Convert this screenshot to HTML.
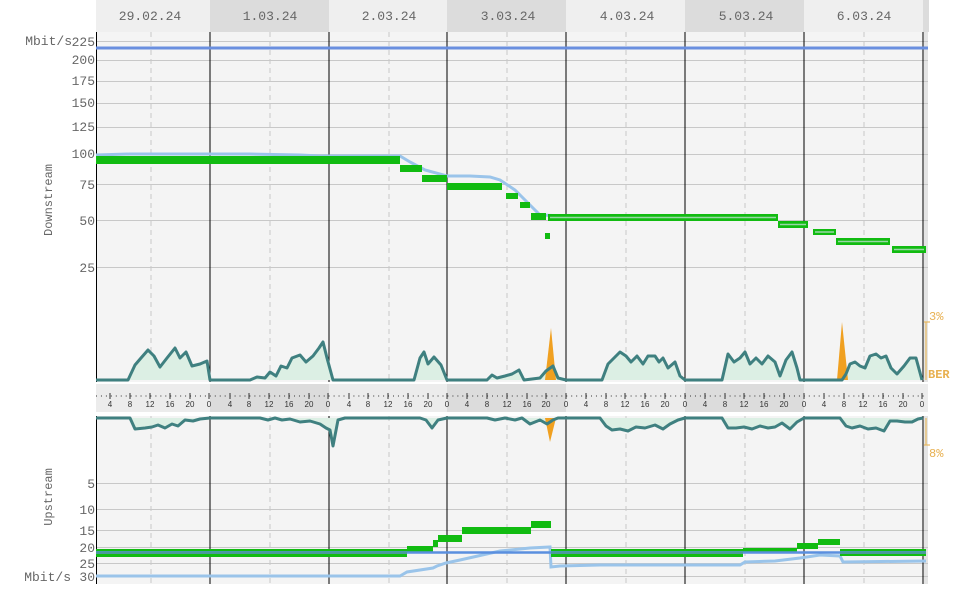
<!DOCTYPE html>
<html><head><meta charset="utf-8"><style>
html,body{margin:0;padding:0;background:#fff;}
svg{display:block;font-family:"Liberation Mono",monospace;}
</style></head><body>
<svg width="960" height="600" viewBox="0 0 960 600" xmlns="http://www.w3.org/2000/svg">
<rect width="960" height="600" fill="#fff"/>
<rect x="96" y="0" width="114" height="32" fill="#efefef"/>
<rect x="210" y="0" width="119" height="32" fill="#dcdcdc"/>
<rect x="329" y="0" width="118" height="32" fill="#efefef"/>
<rect x="447" y="0" width="119" height="32" fill="#dcdcdc"/>
<rect x="566" y="0" width="119" height="32" fill="#efefef"/>
<rect x="685" y="0" width="119" height="32" fill="#dcdcdc"/>
<rect x="804" y="0" width="119" height="32" fill="#efefef"/>
<rect x="923" y="0" width="6" height="32" fill="#dcdcdc"/>
<g font-size="13" fill="#666" text-anchor="middle">
<text x="150" y="20">29.02.24</text><text x="270" y="20">1.03.24</text><text x="389" y="20">2.03.24</text><text x="508" y="20">3.03.24</text><text x="627" y="20">4.03.24</text><text x="746" y="20">5.03.24</text><text x="864" y="20">6.03.24</text>
</g>
<rect x="96" y="32" width="828" height="350" fill="#f4f4f4"/>
<rect x="924" y="32" width="4" height="350" fill="#e4e4e4"/>
<rect x="96" y="384" width="832" height="28" fill="#ececec"/>
<rect x="210" y="384" width="119" height="28" fill="#dcdcdc"/>
<rect x="447" y="384" width="119" height="28" fill="#dcdcdc"/>
<rect x="685" y="384" width="119" height="28" fill="#dcdcdc"/>
<rect x="96" y="416" width="828" height="168" fill="#f4f4f4"/>
<rect x="924" y="416" width="4" height="168" fill="#e4e4e4"/>
<g stroke="#c8c8c8" stroke-width="1">
<line x1="96" x2="928" y1="41.5" y2="41.5"/><line x1="96" x2="928" y1="60.5" y2="60.5"/><line x1="96" x2="928" y1="81.5" y2="81.5"/><line x1="96" x2="928" y1="103.5" y2="103.5"/><line x1="96" x2="928" y1="127.5" y2="127.5"/><line x1="96" x2="928" y1="154.5" y2="154.5"/><line x1="96" x2="928" y1="184.5" y2="184.5"/><line x1="96" x2="928" y1="220.5" y2="220.5"/><line x1="96" x2="928" y1="267.5" y2="267.5"/>
<line x1="96" x2="928" y1="483.5" y2="483.5"/><line x1="96" x2="928" y1="509.5" y2="509.5"/><line x1="96" x2="928" y1="530.5" y2="530.5"/><line x1="96" x2="928" y1="547.5" y2="547.5"/><line x1="96" x2="928" y1="563.5" y2="563.5"/><line x1="96" x2="928" y1="576.5" y2="576.5"/>
</g>
<g stroke="#c8c8c8" stroke-dasharray="5,4">
<line x1="151" x2="151" y1="32" y2="380"/><line x1="270" x2="270" y1="32" y2="380"/><line x1="389" x2="389" y1="32" y2="380"/><line x1="507" x2="507" y1="32" y2="380"/><line x1="626" x2="626" y1="32" y2="380"/><line x1="745" x2="745" y1="32" y2="380"/><line x1="864" x2="864" y1="32" y2="380"/>
<line x1="151" x2="151" y1="416" y2="584"/><line x1="270" x2="270" y1="416" y2="584"/><line x1="389" x2="389" y1="416" y2="584"/><line x1="507" x2="507" y1="416" y2="584"/><line x1="626" x2="626" y1="416" y2="584"/><line x1="745" x2="745" y1="416" y2="584"/><line x1="864" x2="864" y1="416" y2="584"/>
</g>
<g stroke="#000" stroke-width="1">
<line x1="96.5" x2="96.5" y1="32" y2="382"/><line x1="210" x2="210" y1="32" y2="382"/><line x1="329" x2="329" y1="32" y2="382"/><line x1="447" x2="447" y1="32" y2="382"/><line x1="566" x2="566" y1="32" y2="382"/><line x1="685" x2="685" y1="32" y2="382"/><line x1="804" x2="804" y1="32" y2="382"/><line x1="923" x2="923" y1="32" y2="382"/>
<line x1="96.5" x2="96.5" y1="416" y2="584"/><line x1="210" x2="210" y1="416" y2="584"/><line x1="329" x2="329" y1="416" y2="584"/><line x1="447" x2="447" y1="416" y2="584"/><line x1="566" x2="566" y1="416" y2="584"/><line x1="685" x2="685" y1="416" y2="584"/><line x1="804" x2="804" y1="416" y2="584"/><line x1="923" x2="923" y1="416" y2="584"/>
</g>
<line x1="96" x2="928" y1="48" y2="48" stroke="#6a8fdf" stroke-width="3"/>
<polyline fill="none" stroke="#9ac4ea" stroke-width="3" points="96,155 130,154 160,154 200,154 250,154 300,155 320,156 400,156 410,162 425,170 447,176 470,176 490,177 500,180 515,190 530,205 540,215 566,216 600,216 776,216"/>
<g fill="#11bb11">
<rect x="96" y="156" width="304" height="8"/>
<rect x="400" y="165" width="22" height="7"/>
<rect x="422" y="175" width="25" height="7"/>
<rect x="447" y="183" width="55" height="7"/>
<rect x="506" y="193" width="12" height="6"/>
<rect x="520" y="202" width="10" height="6"/>
<rect x="531" y="213" width="15" height="7"/>
<rect x="545" y="233" width="5" height="6"/>
<rect x="548" y="214" width="230" height="7"/>
<rect x="778" y="221" width="30" height="7"/>
<rect x="813" y="229" width="23" height="6"/>
<rect x="836" y="238" width="54" height="7"/>
<rect x="892" y="246" width="34" height="7"/>
</g>
<g stroke="#9ad6a8" stroke-width="1.5">
<line x1="550" x2="776" y1="217.5" y2="217.5"/><line x1="780" x2="806" y1="224.5" y2="224.5"/><line x1="815" x2="834" y1="232" y2="232"/><line x1="838" x2="888" y1="241.5" y2="241.5"/><line x1="894" x2="924" y1="249.5" y2="249.5"/>
</g>
<path d="M96,380 L128,380 L135,365 L141,358 L148,350 L154,356 L160,367 L167,358 L175,348 L180,358 L186,352 L192,366 L200,364 L207,361 L210,380 L250,380 L257,377 L265,378 L270,372 L276,376 L281,366 L287,368 L292,358 L300,355 L306,362 L313,356 L319,348 L323,342 L327,358 L333,380 L414,380 L420,358 L424,352 L428,364 L434,357 L441,365 L447,380 L487,380 L492,375 L497,378 L505,376 L512,374 L519,370 L524,380 L540,378 L546,371 L553,366 L558,378 L566,380 L602,380 L608,364 L614,358 L620,352 L626,356 L631,362 L637,356 L643,364 L648,356 L655,356 L659,362 L663,358 L668,368 L675,362 L680,376 L685,380 L722,380 L728,354 L734,362 L740,358 L745,352 L750,364 L756,358 L762,364 L768,356 L775,362 L780,376 L786,360 L792,352 L797,368 L800,380 L842,380 L846,374 L850,364 L855,362 L860,366 L865,368 L870,356 L876,354 L881,358 L886,356 L891,368 L897,374 L904,366 L910,358 L916,358 L922,380 Z" fill="#dcefe4" stroke="none"/>
<g fill="#f0a020">
<polygon points="545,380 551,328 556,380"/>
<polygon points="837,380 842,322 848,380"/>
</g>
<polyline fill="none" stroke="#3f8080" stroke-width="3" stroke-linejoin="round" points="96,380 128,380 135,365 141,358 148,350 154,356 160,367 167,358 175,348 180,358 186,352 192,366 200,364 207,361 210,380 250,380 257,377 265,378 270,372 276,376 281,366 287,368 292,358 300,355 306,362 313,356 319,348 323,342 327,358 333,380 414,380 420,358 424,352 428,364 434,357 441,365 447,380 487,380 492,375 497,378 505,376 512,374 519,370 524,380 540,378 546,371 553,366 558,378 566,380 602,380 608,364 614,358 620,352 626,356 631,362 637,356 643,364 648,356 655,356 659,362 663,358 668,368 675,362 680,376 685,380 722,380 728,354 734,362 740,358 745,352 750,364 756,358 762,364 768,356 775,362 780,376 786,360 792,352 797,368 800,380 842,380 846,374 850,364 855,362 860,366 865,368 870,356 876,354 881,358 886,356 891,368 897,374 904,366 910,358 916,358 922,380"/>
<g stroke="#e8b860" stroke-width="1.2" fill="none">
<line x1="926" x2="926" y1="322" y2="380"/><line x1="924" x2="930" y1="322" y2="322"/>
<line x1="926" x2="926" y1="418" y2="445"/><line x1="924" x2="930" y1="445" y2="445"/>
</g>
<g font-size="12" fill="#e8b050" font-family="Liberation Mono,monospace">
<text x="929" y="320">3%</text><text x="928" y="378" font-weight="bold">BER</text><text x="929" y="457">8%</text>
</g>
<line x1="96" x2="924" y1="396" y2="396" stroke="#333" stroke-width="1" stroke-dasharray="1,3.95"/>
<g stroke="#333" stroke-width="1">
<line x1="110" x2="110" y1="393" y2="399"/><line x1="130" x2="130" y1="393" y2="399"/><line x1="150" x2="150" y1="393" y2="399"/><line x1="170" x2="170" y1="393" y2="399"/><line x1="190" x2="190" y1="393" y2="399"/><line x1="209" x2="209" y1="393" y2="399"/>
<line x1="230" x2="230" y1="393" y2="399"/><line x1="249" x2="249" y1="393" y2="399"/><line x1="269" x2="269" y1="393" y2="399"/><line x1="289" x2="289" y1="393" y2="399"/><line x1="309" x2="309" y1="393" y2="399"/><line x1="328" x2="328" y1="393" y2="399"/>
<line x1="349" x2="349" y1="393" y2="399"/><line x1="368" x2="368" y1="393" y2="399"/><line x1="388" x2="388" y1="393" y2="399"/><line x1="408" x2="408" y1="393" y2="399"/><line x1="428" x2="428" y1="393" y2="399"/><line x1="447" x2="447" y1="393" y2="399"/>
<line x1="467" x2="467" y1="393" y2="399"/><line x1="487" x2="487" y1="393" y2="399"/><line x1="507" x2="507" y1="393" y2="399"/><line x1="527" x2="527" y1="393" y2="399"/><line x1="546" x2="546" y1="393" y2="399"/><line x1="566" x2="566" y1="393" y2="399"/>
<line x1="586" x2="586" y1="393" y2="399"/><line x1="606" x2="606" y1="393" y2="399"/><line x1="625" x2="625" y1="393" y2="399"/><line x1="645" x2="645" y1="393" y2="399"/><line x1="665" x2="665" y1="393" y2="399"/><line x1="685" x2="685" y1="393" y2="399"/>
<line x1="705" x2="705" y1="393" y2="399"/><line x1="725" x2="725" y1="393" y2="399"/><line x1="744" x2="744" y1="393" y2="399"/><line x1="764" x2="764" y1="393" y2="399"/><line x1="784" x2="784" y1="393" y2="399"/><line x1="804" x2="804" y1="393" y2="399"/>
<line x1="824" x2="824" y1="393" y2="399"/><line x1="844" x2="844" y1="393" y2="399"/><line x1="863" x2="863" y1="393" y2="399"/><line x1="883" x2="883" y1="393" y2="399"/><line x1="903" x2="903" y1="393" y2="399"/><line x1="922" x2="922" y1="393" y2="399"/>
</g>
<g font-size="8" fill="#333" text-anchor="middle" font-family="Liberation Sans,sans-serif">
<text x="110" y="407">4</text><text x="130" y="407">8</text><text x="150" y="407">12</text><text x="170" y="407">16</text><text x="190" y="407">20</text><text x="209" y="407">0</text>
<text x="230" y="407">4</text><text x="249" y="407">8</text><text x="269" y="407">12</text><text x="289" y="407">16</text><text x="309" y="407">20</text><text x="328" y="407">0</text>
<text x="349" y="407">4</text><text x="368" y="407">8</text><text x="388" y="407">12</text><text x="408" y="407">16</text><text x="428" y="407">20</text><text x="447" y="407">0</text>
<text x="467" y="407">4</text><text x="487" y="407">8</text><text x="507" y="407">12</text><text x="527" y="407">16</text><text x="546" y="407">20</text><text x="566" y="407">0</text>
<text x="586" y="407">4</text><text x="606" y="407">8</text><text x="625" y="407">12</text><text x="645" y="407">16</text><text x="665" y="407">20</text><text x="685" y="407">0</text>
<text x="705" y="407">4</text><text x="725" y="407">8</text><text x="744" y="407">12</text><text x="764" y="407">16</text><text x="784" y="407">20</text><text x="804" y="407">0</text>
<text x="824" y="407">4</text><text x="844" y="407">8</text><text x="863" y="407">12</text><text x="883" y="407">16</text><text x="903" y="407">20</text><text x="922" y="407">0</text>
</g>
<path d="M96,418 L130,418 L135,429 L145,428 L152,427 L158,425 L165,428 L172,424 L178,426 L185,420 L193,421 L200,419 L210,418 L260,418 L268,420 L275,418 L282,420 L290,419 L300,422 L310,421 L320,424 L326,428 L330,430 L333,446 L338,420 L345,418 L420,418 L426,420 L432,428 L438,420 L447,418 L487,418 L495,420 L505,418 L515,420 L522,418 L530,424 L540,420 L547,424 L550,442 L555,418 L566,418 L600,418 L606,426 L612,430 L620,429 L628,431 L636,427 L645,428 L655,425 L663,429 L670,424 L678,420 L685,418 L722,418 L728,428 L736,428 L744,427 L752,429 L760,426 L768,428 L775,427 L782,423 L790,429 L797,422 L804,418 L840,418 L846,426 L852,428 L860,426 L868,429 L876,428 L884,431 L890,421 L897,421 L905,422 L912,422 L918,419 L923,418 Z" fill="#dcefe4"/>
<polygon points="545,418 550,442 556,418" fill="#f0a020"/>
<polyline fill="none" stroke="#3f8080" stroke-width="3" stroke-linejoin="round" points="96,418 130,418 135,429 145,428 152,427 158,425 165,428 172,424 178,426 185,420 193,421 200,419 210,418 260,418 268,420 275,418 282,420 290,419 300,422 310,421 320,424 326,428 330,430 333,446 338,420 345,418 420,418 426,420 432,428 438,420 447,418 487,418 495,420 505,418 515,420 522,418 530,424 540,420 547,424 553,420 558,418 566,418 600,418 606,426 612,430 620,429 628,431 636,427 645,428 655,425 663,429 670,424 678,420 685,418 722,418 728,428 736,428 744,427 752,429 760,426 768,428 775,427 782,423 790,429 797,422 804,418 840,418 846,426 852,428 860,426 868,429 876,428 884,431 890,421 897,421 905,422 912,422 918,419 923,418"/>
<polyline fill="none" stroke="#9ac4ea" stroke-width="3" points="96,576 400,576 407,572 433,568 437,566 446,563 460,560 500,551 530,548 550,547 551,567 560,566 600,565 740,565 745,562 775,561 800,558 820,555 840,556 843,562 926,561"/>
<g fill="#11bb11">
<rect x="96" y="549" width="311" height="8"/>
<rect x="407" y="546" width="26" height="6"/>
<rect x="433" y="540" width="5" height="7"/>
<rect x="438" y="535" width="24" height="7"/>
<rect x="462" y="527" width="69" height="7"/>
<rect x="531" y="521" width="20" height="7"/>
<rect x="551" y="549" width="192" height="8"/>
<rect x="743" y="548" width="54" height="5"/>
<rect x="797" y="543" width="21" height="6"/>
<rect x="818" y="539" width="22" height="6"/>
<rect x="840" y="549" width="86" height="7"/>
</g>
<line x1="96" x2="926" y1="552.5" y2="552.5" stroke="#5a8fdf" stroke-width="2.5"/>
<g stroke="#4a9a9a" stroke-width="2"><line x1="96" x2="407" y1="553" y2="553"/><line x1="551" x2="743" y1="553" y2="553"/><line x1="840" x2="926" y1="553" y2="553"/></g>
<g font-size="13" fill="#666" text-anchor="end">
<text x="72" y="45">Mbit/s</text>
<text x="95" y="46">225</text><text x="95" y="64">200</text><text x="95" y="85">175</text><text x="95" y="107">150</text><text x="95" y="131">125</text><text x="95" y="158">100</text><text x="95" y="189">75</text><text x="95" y="225">50</text><text x="95" y="272">25</text>
<text x="95" y="488">5</text><text x="95" y="514">10</text><text x="95" y="535">15</text><text x="95" y="552">20</text><text x="95" y="568">25</text><text x="95" y="581">30</text>
<text x="71" y="581">Mbit/s</text>
</g>
<text transform="translate(52,200) rotate(-90)" font-size="12" fill="#666" text-anchor="middle">Downstream</text>
<text transform="translate(52,497) rotate(-90)" font-size="12" fill="#666" text-anchor="middle">Upstream</text>
</svg>
</body></html>
